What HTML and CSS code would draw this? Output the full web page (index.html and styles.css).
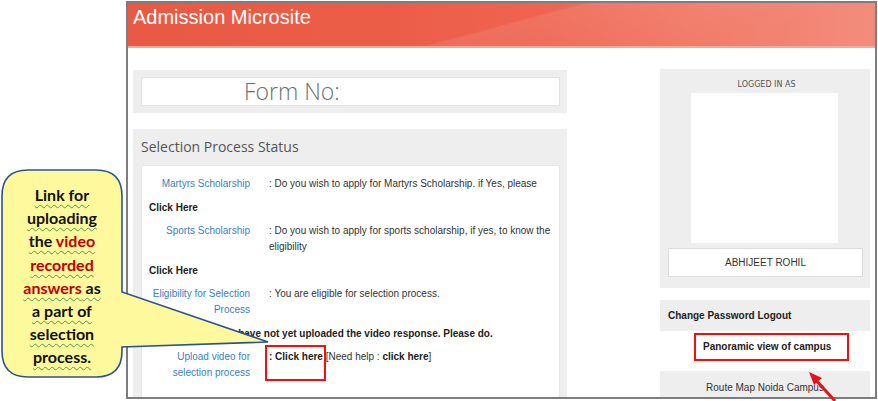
FILE: index.html
```html
<!DOCTYPE html>
<html lang="en">
<head>
<meta charset="utf-8">
<title>Admission Microsite</title>
<link rel="stylesheet" href="styles.css">
</head>
<body>
<div class="frame">
  <header class="topbar">
    <h1 class="brand">Admission Microsite</h1>
  </header>
  <div class="content">
    <main class="main-col">
      <section class="panel form-panel">
        <div class="form-box">Form No:</div>
      </section>
      <section class="panel status-panel">
        <h2 class="panel-title">Selection Process Status</h2>
        <div class="status-box">
          <div class="row"><div class="label">Martyrs Scholarship</div><div class="value">: Do you wish to apply for Martyrs Scholarship. if Yes, please</div></div>
          <div class="click">Click Here</div>
          <div class="row"><div class="label">Sports Scholarship</div><div class="value">: Do you wish to apply for sports scholarship, if yes, to know the eligibility</div></div>
          <div class="click">Click Here</div>
          <div class="row"><div class="label">Eligibility for Selection Process</div><div class="value">: You are eligible for selection process.</div></div>
          <div class="notice">You have not yet uploaded the video response. Please do.</div>
          <div class="row"><div class="label">Upload video for selection process</div><div class="value"><span class="hl"><b>: Click here</b></span> [Need help : <b>click here</b>]</div></div>
        </div>
      </section>
    </main>
    <aside class="side-col">
      <section class="panel login-panel">
        <div class="login-label">LOGGED IN AS</div>
        <div class="photo"></div>
        <div class="name-box">ABHIJEET ROHIL</div>
      </section>
      <section class="panel links-panel">Change Password Logout</section>
      <div class="pano-box">Panoramic view of campus</div>
      <section class="panel route-panel">Route Map Noida Campus</section>
    </aside>
  </div>
</div>

<svg class="callout-shape" width="280" height="230" viewBox="0 160 280 230">
  <path d="M28 170 H96 Q122 170 122 196 V292 L268 342 L122 347 V351 Q122 377 96 377 H28 Q2 377 2 351 V196 Q2 170 28 170 Z" fill="#fdf99c" stroke="#2f528f" stroke-width="1.6"/>
</svg>
<div class="callout-text">
  <span class="cl">Link for</span>
  <span class="cl">uploading</span>
  <span class="cl">the <em class="red">video</em></span>
  <span class="cl"><em class="red">recorded</em></span>
  <span class="cl"><em class="red">answers</em> as</span>
  <span class="cl">a part of</span>
  <span class="cl">selection</span>
  <span class="cl">process.</span>
</div>

<svg class="arrow" width="50" height="45" viewBox="800 360 50 45">
  <line x1="835" y1="401" x2="815" y2="379" stroke="#e3141b" stroke-width="3"/>
  <polygon points="809,372 822,378 814,385" fill="#e3141b"/>
</svg>
</body>
</html>
```

FILE: styles.css
```css
* { box-sizing: border-box; }
html, body { margin: 0; padding: 0; }
body {
  width: 878px;
  height: 401px;
  overflow: hidden;
  background: #ffffff;
  position: relative;
  font-family: "Liberation Sans", Arial, sans-serif;
  color: #333;
}

.frame {
  margin: 1px 0 0 126px;
  width: 751px;
  height: 398px;
  border: 2px solid #7d7d7d;
  overflow: hidden;
  background: #fff;
}

.topbar {
  height: 45px;
  padding: 2px 5px 0;
  background:
    linear-gradient(165deg, rgba(255,255,255,0) 50%, rgba(255,255,255,0.09) 51%, rgba(255,255,255,0.02) 80%),
    linear-gradient(90deg, #e95a44 0%, #ec5d48 35%, #ee6450 55%, #f17866 75%, #f38a7a 100%);
  border-bottom: 2px solid #f6a797;
}
.brand {
  margin: 0;
  font-family: "Liberation Sans", Arial, sans-serif;
  font-weight: normal;
  font-size: 20px;
  line-height: 24px;
  color: #fff;
}

.content {
  display: flex;
  align-items: flex-start;
  padding: 21px 5px 0 5px;
  gap: 93px;
}
.main-col {
  width: 434px;
  padding-top: 1px;
  display: flex;
  flex-direction: column;
  gap: 16px;
}
.side-col {
  width: 210px;
  display: flex;
  flex-direction: column;
}

.panel { background: #eeeeee; }

.form-panel { padding: 7px 7px 7px 8px; }
.form-box {
  height: 29px;
  background: #fff;
  border: 1px solid #e2e2e2;
  padding-left: 102px;
  font-family: "Open Sans", sans-serif;
  font-weight: 300;
  font-size: 23px;
  line-height: 26px;
  color: #6f6f6f;
}

.status-panel { padding: 0 7px 0 8px; height: 300px; }
.panel-title {
  margin: 0;
  height: 36px;
  font-family: "Open Sans", sans-serif;
  font-weight: normal;
  font-size: 14px;
  line-height: 36px;
  color: #555;
}
.status-box {
  background: #fff;
  border: 1px solid #e6e6e6;
  padding: 10px 2px 10px 7px;
  display: flex;
  flex-direction: column;
  gap: 7.5px;
  font-size: 10px;
  line-height: 16px;
  color: #333;
  height: 260px;
}
.row {
  display: grid;
  grid-template-columns: 101px 1fr;
  column-gap: 19px;
}
.label { text-align: right; color: #3a7fc2; }
.click { font-weight: bold; color: #222; }
.notice { font-weight: bold; color: #222; text-align: center; padding-left: 4px; }
.value b { color: #222; }
.hl { position: relative; }
.hl::after {
  content: "";
  position: absolute;
  left: -4px;
  right: -3px;
  top: -6px;
  height: 32px;
  border: 2px solid #ee1111;
}

.login-panel {
  padding: 11px 7px 11px 8px;
  display: flex;
  flex-direction: column;
  align-items: center;
}
.login-label {
  font-family: "DejaVu Sans", Verdana, sans-serif;
  font-size: 8px;
  line-height: 10px;
  color: #555;
  margin-left: 2px;
}
.photo {
  width: 147px;
  height: 150px;
  margin-top: 3px;
  margin-right: 2px;
  background: #fff;
}
.name-box {
  align-self: stretch;
  margin-top: 5px;
  height: 29px;
  background: #fff;
  border: 1px solid #dcdcdc;
  text-align: center;
  font-size: 10px;
  line-height: 27px;
  color: #333;
}
.links-panel {
  margin-top: 12px;
  height: 31px;
  padding-left: 8px;
  font-size: 10px;
  font-weight: bold;
  line-height: 31px;
  color: #222;
}
.pano-box {
  margin: 2px 0 0 34px;
  width: 155px;
  height: 28px;
  border: 2px solid #ee1111;
  padding-left: 7px;
  font-size: 10px;
  font-weight: bold;
  line-height: 24px;
  color: #222;
}
.route-panel {
  margin-top: 10px;
  height: 40px;
  padding-top: 11px;
  text-align: center;
  font-size: 10px;
  line-height: 12px;
  color: #333;
}

.callout-shape {
  position: absolute;
  left: 0;
  top: 160px;
}
.callout-text {
  position: absolute;
  left: 2px;
  top: 183px;
  width: 120px;
  display: flex;
  flex-direction: column;
  align-items: center;
  font-family: Lato, "Open Sans", sans-serif;
  font-weight: bold;
  font-size: 16px;
  line-height: 23.2px;
  color: #111;
}
.cl {
  display: block;
  text-decoration: underline wavy #4aa04a;
  text-decoration-thickness: 1px;
  text-underline-offset: 3px;
}
.red { font-style: normal; color: #c00000; }

.arrow {
  position: absolute;
  left: 800px;
  top: 360px;
}
```
